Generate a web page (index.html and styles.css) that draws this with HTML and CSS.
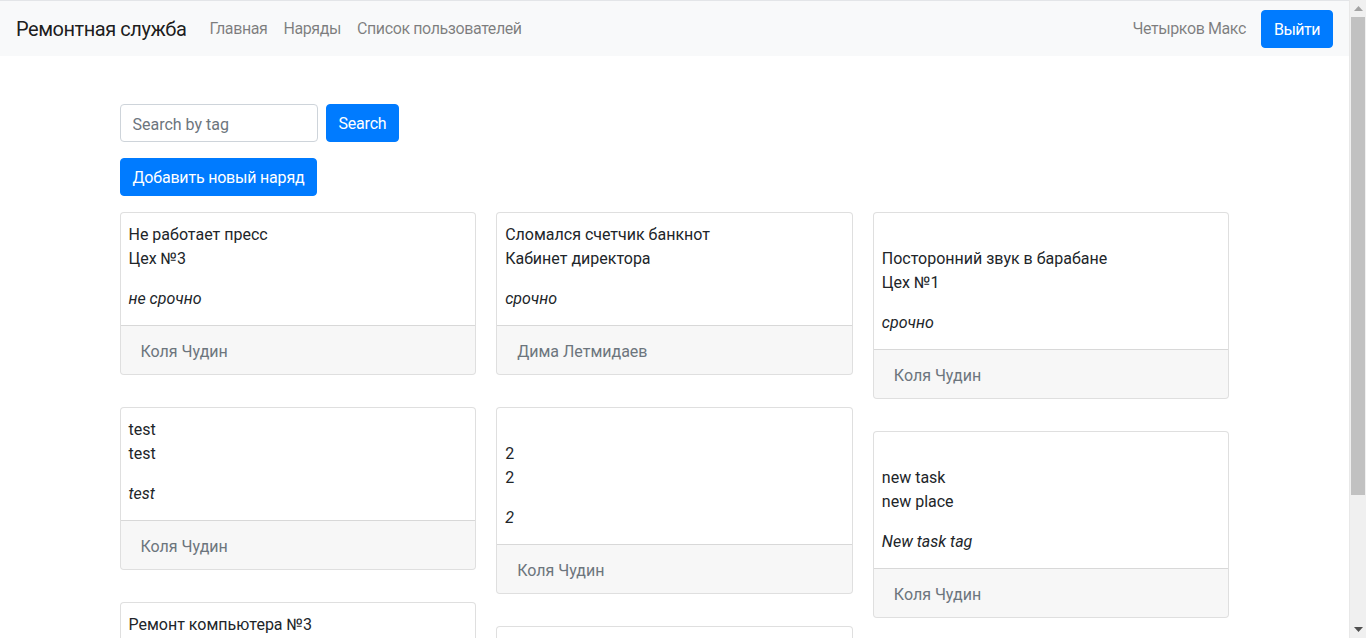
FILE: index.html
```html
<!DOCTYPE html>
<html lang="ru">
<head>
<meta charset="utf-8">
<title>Ремонтная служба</title>
<link rel="stylesheet" href="styles.css">
</head>
<body>
<div class="page">
  <nav class="navbar">
    <a class="brand" href="#">Ремонтная служба</a>
    <ul class="nav">
      <li><a class="nav-link" href="#">Главная</a></li>
      <li><a class="nav-link" href="#">Наряды</a></li>
      <li><a class="nav-link" href="#">Список пользователей</a></li>
    </ul>
    <div class="nav-right">
      <span class="nav-link user">Четырков Макс</span>
      <button class="btn btn-primary">Выйти</button>
    </div>
  </nav>

  <main class="container">
    <form class="search-form">
      <input class="form-control" type="text" placeholder="Search by tag">
      <button class="btn btn-primary" type="button">Search</button>
    </form>
    <div class="add-row">
      <button class="btn btn-primary" type="button">Добавить новый наряд</button>
    </div>

    <div class="card-columns">
      <div class="card-col">
        <div class="card">
          <div class="card-body">
            <p>Не работает пресс<br>Цех №3</p>
            <p><em>не срочно</em></p>
          </div>
          <div class="card-footer">Коля Чудин</div>
        </div>
        <div class="card">
          <div class="card-body">
            <p>test<br>test</p>
            <p><em>test</em></p>
          </div>
          <div class="card-footer">Коля Чудин</div>
        </div>
        <div class="card">
          <div class="card-body">
            <p>Ремонт компьютера №3<br>Бухгалтерия</p>
            <p><em>срочно</em></p>
          </div>
          <div class="card-footer">Дима Летмидаев</div>
        </div>
      </div>

      <div class="card-col">
        <div class="card">
          <div class="card-body">
            <p>Сломался счетчик банкнот<br>Кабинет директора</p>
            <p><em>срочно</em></p>
          </div>
          <div class="card-footer">Дима Летмидаев</div>
        </div>
        <div class="card">
          <div class="card-body">
            <p><br>2<br>2</p>
            <p><em>2</em></p>
          </div>
          <div class="card-footer">Коля Чудин</div>
        </div>
        <div class="card">
          <div class="card-body">
            <p><br>Проверка<br>Склад</p>
            <p><em>не срочно</em></p>
          </div>
          <div class="card-footer">Коля Чудин</div>
        </div>
      </div>

      <div class="card-col">
        <div class="card">
          <div class="card-body">
            <p><br>Посторонний звук в барабане<br>Цех №1</p>
            <p><em>срочно</em></p>
          </div>
          <div class="card-footer">Коля Чудин</div>
        </div>
        <div class="card">
          <div class="card-body">
            <p><br>new task<br>new place</p>
            <p><em>New task tag</em></p>
          </div>
          <div class="card-footer">Коля Чудин</div>
        </div>
      </div>
    </div>
  </main>
</div>

<div class="scrollbar" aria-hidden="true">
  <div class="sb-arrow">
    <svg width="9" height="5" viewBox="0 0 9 5"><path d="M0 5 L4.5 0 L9 5 Z" fill="#a3a3a3"/></svg>
  </div>
  <div class="sb-track">
    <div class="sb-thumb"></div>
  </div>
  <div class="sb-arrow">
    <svg width="9" height="5" viewBox="0 0 9 5"><path d="M0 0 L9 0 L4.5 5 Z" fill="#505050"/></svg>
  </div>
</div>
</body>
</html>
```

FILE: styles.css
```css
* {
  box-sizing: border-box;
}

html, body {
  margin: 0;
  padding: 0;
}

body {
  display: flex;
  height: 100vh;
  overflow: hidden;
  font-family: Roboto, "Liberation Sans", sans-serif;
  font-size: 16px;
  line-height: 1.5;
  color: #212529;
  background: #fff;
}

.page {
  flex: 1;
  min-width: 0;
  overflow: hidden;
}

/* scrollbar */
.scrollbar {
  width: 17px;
  flex: none;
  display: flex;
  flex-direction: column;
  background: #f0f0f0;
  border-left: 1px solid #e8e8e8;
}

.sb-arrow {
  height: 17px;
  display: flex;
  align-items: center;
  justify-content: center;
}

.sb-track {
  flex: 1;
  padding: 0 1px;
}

.sb-thumb {
  height: 478px;
  background: #c1c1c1;
}

/* navbar */
.navbar {
  display: flex;
  align-items: center;
  height: 56px;
  padding: 0 16px;
  background: #f8f9fa;
  border-top: 1px solid #e3e5e8;
}

.brand {
  font-size: 20px;
  line-height: 30px;
  color: rgba(0, 0, 0, 0.9);
  text-decoration: none;
  margin-right: 15px;
  white-space: nowrap;
  letter-spacing: -0.45px;
}

.nav {
  display: flex;
  list-style: none;
  margin: 0;
  padding: 0;
}

.nav-link {
  display: block;
  padding: 8px;
  color: rgba(0, 0, 0, 0.5);
  text-decoration: none;
  letter-spacing: -0.4px;
}

.nav-right {
  margin-left: auto;
  display: flex;
  align-items: center;
}

.user {
  margin-right: 7px;
}

.btn {
  display: inline-block;
  font-family: inherit;
  font-size: 16px;
  line-height: 24px;
  padding: 7px 12px 5px;
  border: 1px solid transparent;
  border-radius: 4px;
  cursor: pointer;
  letter-spacing: -0.2px;
}

.navbar .btn {
  letter-spacing: -0.5px;
}

.btn-primary {
  color: #fff;
  background: #007bff;
  border-color: #007bff;
}

/* content */
.container {
  width: 1140px;
  margin: 48px auto 0;
  padding: 0 15px;
}

.search-form {
  display: flex;
  gap: 8px;
  margin: 0;
}

.form-control {
  width: 198px;
  height: 38px;
  padding: 7px 12px 5px;
  font-family: inherit;
  font-size: 16px;
  line-height: 24px;
  color: #495057;
  border: 1px solid #ced4da;
  border-radius: 4px;
}

.form-control::placeholder {
  color: #6c757d;
}

.add-row {
  margin-top: 16px;
}

.card-columns {
  display: grid;
  grid-template-columns: repeat(3, 1fr);
  column-gap: 20px;
  margin-top: 16px;
}

.card-col {
  display: flex;
  flex-direction: column;
  gap: 32px;
}

.card {
  border: 1px solid rgba(0, 0, 0, 0.125);
  border-radius: 4px;
  background: #fff;
  overflow: hidden;
}

.card-body {
  padding: 10px 8px 0;
}

.card-body p {
  margin: 0 0 16px;
}

.card-body p:last-child {
  margin-bottom: 14px;
}

.card-footer {
  padding: 14px 20px 10px;
  background: rgba(0, 0, 0, 0.03);
  border-top: 1px solid rgba(0, 0, 0, 0.125);
  color: #6c757d;
}
```
